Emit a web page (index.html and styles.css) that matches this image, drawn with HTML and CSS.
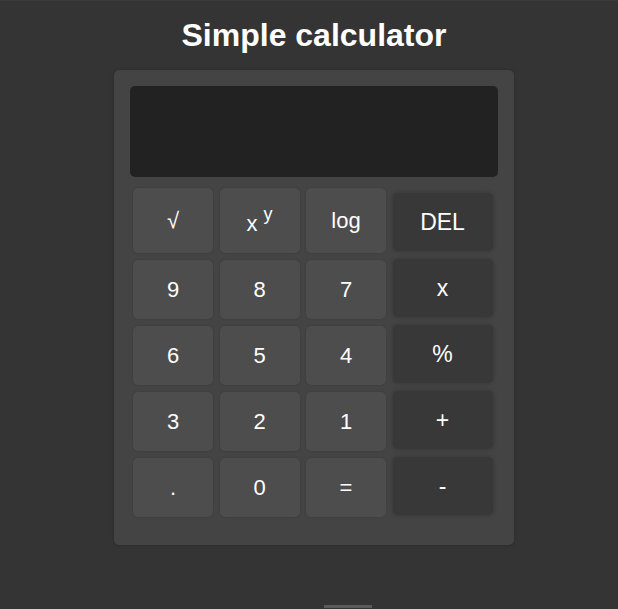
FILE: index.html
```html
<!DOCTYPE html>
<html lang="en">
<head>
<meta charset="utf-8">
<title>Simple calculator</title>
<link rel="stylesheet" href="styles.css">
</head>
<body>
<h1 class="title">Simple calculator</h1>
<div class="calc">
  <div class="display"></div>
  <div class="keys">
    <button class="key">√</button>
    <button class="key"><span class="pow">x <sup class="sup">y</sup></span></button>
    <button class="key">log</button>
    <button class="key op op-first">DEL</button>

    <button class="key">9</button>
    <button class="key">8</button>
    <button class="key">7</button>
    <button class="key op">x</button>

    <button class="key">6</button>
    <button class="key">5</button>
    <button class="key">4</button>
    <button class="key op">%</button>

    <button class="key">3</button>
    <button class="key">2</button>
    <button class="key">1</button>
    <button class="key op">+</button>

    <button class="key">.</button>
    <button class="key">0</button>
    <button class="key">=</button>
    <button class="key op">-</button>
  </div>
</div>
<div class="peek"></div>
</body>
</html>
```
FILE: styles.css
```css
html, body {
  margin: 0;
  padding: 0;
}
body {
  background: #343434;
  font-family: "Liberation Sans", Arial, sans-serif;
  color: #fff;
  height: 609px;
  overflow: hidden;
  border-top: 1px solid #3b3b3b;
  box-sizing: border-box;
  padding-left: 10px;
}
.title {
  margin: 16px 0 0;
  font-size: 32px;
  line-height: 37px;
  font-weight: bold;
  text-align: center;
  color: #fff;
}
.calc {
  width: 400px;
  box-sizing: border-box;
  margin: 16px auto 0;
  padding: 16px 16px 28px;
  background: #444444;
  border-radius: 5px;
  box-shadow: 0 0 3px rgba(0, 0, 0, 0.25);
}
.display {
  height: 91px;
  background: #222222;
  border-radius: 5px;
}
.keys {
  margin: 11px 0 0 3px;
  display: grid;
  grid-template-columns: 80px 80px 80px 100px;
  grid-template-rows: 65px 59px 59px 59px 59px;
  column-gap: 6.5px;
  row-gap: 7px;
}
.key {
  border: none;
  margin: 0;
  padding: 0;
  background: #4d4d4d;
  color: #fff;
  font-family: "Liberation Sans", Arial, sans-serif;
  font-size: 22px;
  border-radius: 5px;
  box-shadow: 0 0 2px rgba(0, 0, 0, 0.18);
  display: flex;
  align-items: center;
  justify-content: center;
}
.op {
  background: #383838;
  height: 58px;
  align-self: center;
  font-size: 23px;
  margin-top: -3px;
  box-shadow: 0 0 4px rgba(0, 0, 0, 0.25);
}
.op-first {
  margin-top: 3px;
}
.pow {
  display: inline-block;
  padding-top: 6px;
}
.sup {
  font-size: 18px;
  line-height: 0;
  position: relative;
  top: -2px;
  vertical-align: super;
}
.peek {
  width: 48px;
  height: 3px;
  margin: 60px 0 0 314px;
  background: #5a5a5a;
}
```
